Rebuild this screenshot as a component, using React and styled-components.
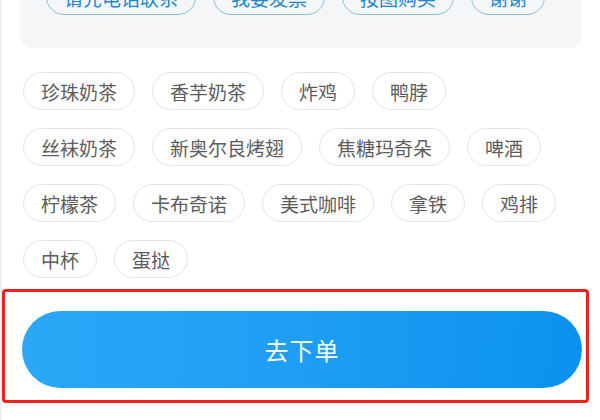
import React from 'react';
import styled, {createGlobalStyle} from 'styled-components';

const GlobalStyle = createGlobalStyle`
  html, body {
    margin: 0;
    padding: 0;
    background: #fff;
  }
  body {
    font-family: "Noto Sans CJK SC", "Noto Sans", sans-serif;
  }
`

const remarks = ['请先电话联系', '我要发票', '按图购买', '谢谢']
const tags = [
    '珍珠奶茶', '香芋奶茶', '炸鸡', '鸭脖',
    '丝袜奶茶', '新奥尔良烤翅', '焦糖玛奇朵', '啤酒',
    '柠檬茶', '卡布奇诺', '美式咖啡', '拿铁', '鸡排',
    '中杯', '蛋挞'
]

const App = () => {
    return (
        <Page>
            <GlobalStyle/>
            <RemarkCard>
                {remarks.map(r => <Chip key={r} $blue>{r}</Chip>)}
            </RemarkCard>
            <TagList>
                {tags.map(t => <Chip key={t}>{t}</Chip>)}
            </TagList>
            <Highlight>
                <OrderButton>去下单</OrderButton>
            </Highlight>
        </Page>
    );
};

const Page = styled.div`
  width: 600px;
  height: 420px;
  overflow: hidden;
  box-sizing: border-box;
  border-left: 2px solid #f0f1f2;
`

const RemarkCard = styled.div`
  margin: -40px 0 0 18px;
  width: 562px;
  box-sizing: border-box;
  padding: 19px 26px 33px;
  background: #f4f6f8;
  border-radius: 12px;
  display: flex;
  gap: 17px;
`

const Chip = styled.div`
  box-sizing: border-box;
  height: ${p => p.$blue ? '36px' : '38px'};
  padding: 0 17px;
  border-radius: 19px;
  border: ${p => p.$blue ? '1.5px solid #8cbcd9' : '1px solid #e4e4e4'};
  background: ${p => p.$blue ? 'transparent' : '#fff'};
  color: ${p => p.$blue ? '#1d87cf' : '#5c5c5c'};
  font-size: 19px;
  line-height: 1;
  display: flex;
  align-items: center;
  white-space: nowrap;
`

const TagList = styled.div`
  margin: 24px 0 0 21px;
  width: 540px;
  display: flex;
  flex-wrap: wrap;
  column-gap: 17px;
  row-gap: 18px;
`

const Highlight = styled.div`
  margin: 11px 0 0 0;
  width: 587px;
  height: 114px;
  box-sizing: border-box;
  border: 3px solid #f2201c;
  border-radius: 4px;
  padding: 19px 0 0 17px;
`

const OrderButton = styled.button`
  display: flex;
  align-items: center;
  justify-content: center;
  width: 560px;
  height: 77px;
  border: none;
  border-radius: 39px;
  background: linear-gradient(95deg, #2ba7f6 0%, #1e9ef4 50%, #0b92ee 100%);
  color: #fff;
  font-family: "Noto Sans CJK SC", "Noto Sans", sans-serif;
  font-size: 24px;
  letter-spacing: 1px;
  padding: 0;
`

export default App;
